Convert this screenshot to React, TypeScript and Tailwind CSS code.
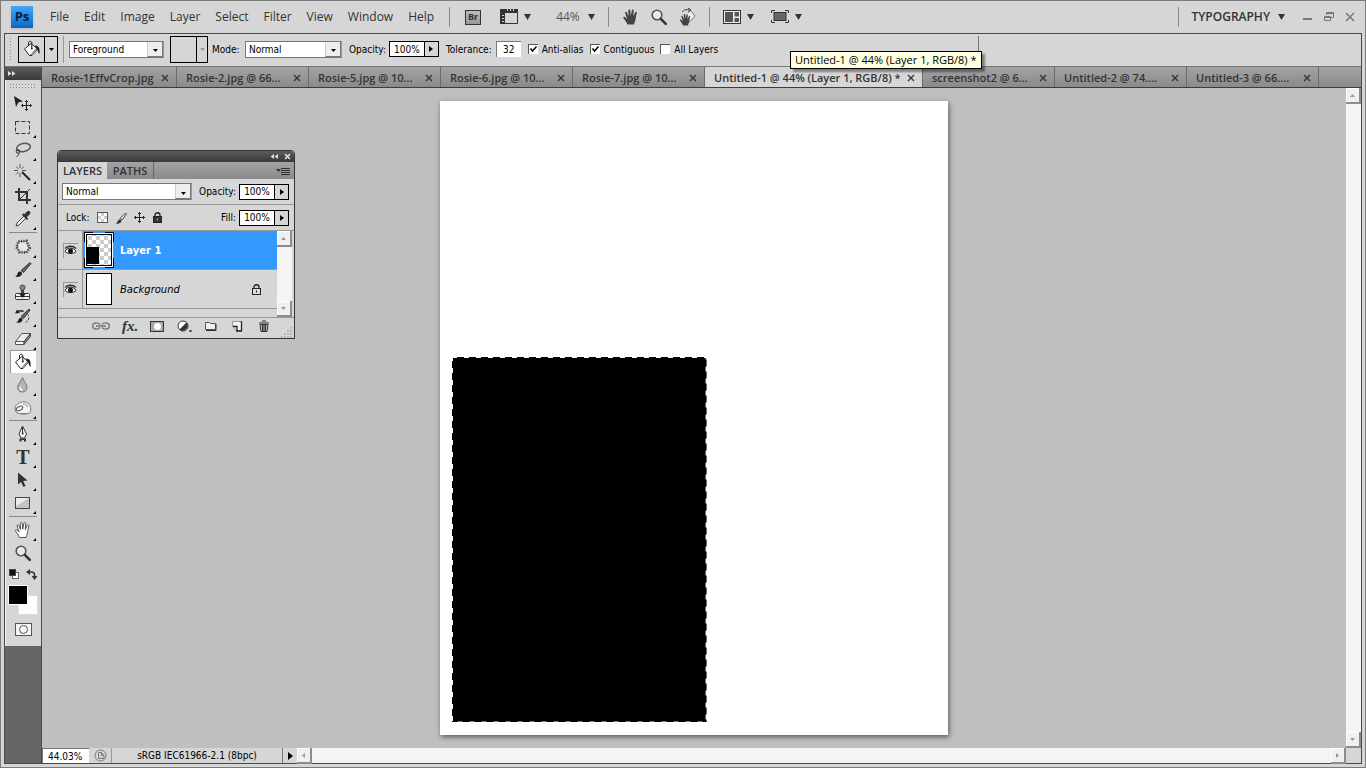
import { useState } from 'react';
import type { ReactNode } from 'react';

const MENUS = ['File', 'Edit', 'Image', 'Layer', 'Select', 'Filter', 'View', 'Window', 'Help'];

const TABS = [
  'Rosie-1EffvCrop.jpg',
  'Rosie-2.jpg @ 66...',
  'Rosie-5.jpg @ 10...',
  'Rosie-6.jpg @ 10...',
  'Rosie-7.jpg @ 10...',
  'Untitled-1 @ 44% (Layer 1, RGB/8) *',
  'screenshot2 @ 6...',
  'Untitled-2 @ 74....',
  'Untitled-3 @ 66....',
];
const ACTIVE_TAB = 5;

function Icon({ size = 18, className = '', children }: { size?: number; className?: string; children: ReactNode }) {
  return (
    <svg
      width={size}
      height={size}
      viewBox={`0 0 ${size} ${size}`}
      fill="none"
      stroke="#333"
      className={`shrink-0 ${className}`}
      aria-hidden="true"
    >
      {children}
    </svg>
  );
}

function Caret() {
  return (
    <svg width="7" height="6" viewBox="0 0 7 6" fill="#333" className="shrink-0" aria-hidden="true">
      <path d="M0 0h7L3.500 6z" />
    </svg>
  );
}

function SmallCaret({ fill = '#000' }: { fill?: string }) {
  return (
    <svg width="5" height="3" viewBox="0 0 5 3" fill={fill} className="shrink-0" aria-hidden="true">
      <path d="M0 0h5L2.500 3z" />
    </svg>
  );
}

function RightCaret() {
  return (
    <svg width="4" height="6" viewBox="0 0 4 6" fill="#000" className="shrink-0" aria-hidden="true">
      <path d="M0 0l4 3-4 3z" />
    </svg>
  );
}

function BucketIcon() {
  return (
    <Icon>
      <path d="M1.500 9L8 3.500l6.500 5.500L9 15.500H6.500z" fill="#fff" stroke="#222" />
      <path d="M7 15l5.500-6.500 2 .5L9.500 15z" fill="#999" stroke="none" />
      <path d="M5.500 6V3c0-2.300 3.300-2.300 3.300 0v5" stroke="#222" />
      <circle cx="8.800" cy="8.500" r="1" fill="#222" stroke="none" />
      <path d="M12 5.500c3.500 0 5 2 4.600 8.500-1.300-.5-1.500-3.500-3-5z" fill="#222" stroke="none" />
    </Icon>
  );
}

function ZoomIcon() {
  return (
    <Icon>
      <circle cx="7" cy="7" r="4.800" fill="#e9e9e9" strokeWidth="1.600" stroke="#555" />
      <path d="M4.500 6.500c.3-1.200 1-1.900 2.200-2" stroke="#fff" />
      <path d="M10.800 10.800l5 5" strokeWidth="2.600" strokeLinecap="round" />
    </Icon>
  );
}

const HAND_PATH =
  'M5.500 16.500c-1-2.500-2.500-4-4-6.300-.8-1.300.7-2 1.700-1l1.900 1.900L3.200 5c-.4-1.500 1.300-1.900 1.800-.5l1.600 4L6.300 2.600c0-1.500 1.900-1.500 2 0l.5 5.500L9.800 2.500c.3-1.400 2-1.200 1.900.3l-.4 5.800 1.800-4.100c.6-1.300 2.200-.7 1.700.8-.9 3-1 5.200-1.500 7.200-.3 1.600-1.100 2.500-1.300 4z';

const toolGroups: { name: string; icon: ReactNode; plain?: boolean }[][] = [
  [
    {
      name: 'Move',
      plain: true,
      icon: (
        <Icon>
          <path d="M0 1l9 5.500-4.500.8L2 12z" fill="#222" stroke="none" />
          <path
            d="M12.500 5.500v10M7.500 10.500h10M11 7l1.500-1.500L14 7M11 14l1.500 1.500L14 14M9 9l-1.500 1.500L9 12M16 9l1.500 1.500L16 12"
            stroke="#222"
          />
        </Icon>
      ),
    },
    {
      name: 'Rectangular Marquee',
      icon: (
        <Icon>
          <rect x="1.500" y="3.500" width="14" height="12" strokeDasharray="4 2" />
        </Icon>
      ),
    },
    {
      name: 'Lasso',
      icon: (
        <Icon>
          <ellipse cx="9.500" cy="6.500" rx="7" ry="4" transform="rotate(-12 9.500 6.500)" strokeWidth="1.500" stroke="#555" />
          <circle cx="4" cy="10.500" r="1.800" />
          <path d="M4 12c1.500 1 .8 3-1.500 3.500" />
        </Icon>
      ),
    },
    {
      name: 'Magic Wand',
      icon: (
        <Icon>
          <path d="M8 8l8 8" stroke="#222" strokeWidth="2" />
          <path d="M6 0v4M6 9v4M0 6.500h4M8 6.500h4M2 2.500l2.500 2.500M10 2.500L7.500 5M2 10.500L4.500 8" stroke="#555" />
        </Icon>
      ),
    },
    {
      name: 'Crop',
      icon: (
        <Icon>
          <path d="M5 1v12h12M1 5h12v12" strokeWidth="2" />
          <path d="M5 13L16 2" />
        </Icon>
      ),
    },
    {
      name: 'Eyedropper',
      icon: (
        <Icon>
          <path d="M2 16l1-3 7-7 2 2-7 7z" fill="#eee" stroke="#444" />
          <path d="M8 5l5 5 1.300-1.300-1.500-1.500L16 4c1.500-2-1-4-3-2.500L10.500 4 9.300 3.200z" fill="#333" stroke="none" />
        </Icon>
      ),
    },
  ],
  [
    {
      name: 'Patch',
      icon: (
        <Icon>
          <path d="M4.500 3.500l8-.5 3 7-3 4.500-7-.5-3-5z" fill="#e8e8e8" stroke="#777" />
          <path d="M4.500 3.500l8-.5 3 7-3 4.500-7-.5-3-5z" stroke="#444" strokeWidth="3" strokeDasharray="1 1.500" />
        </Icon>
      ),
    },
    {
      name: 'Brush',
      icon: (
        <Icon>
          <path d="M7 9.500L16 1.500l1 1-7.500 9z" fill="#666" />
          <path d="M1 15.500c2.500-.5 2-3 3.500-4.500 1.500-1.300 4 .2 3.500 2-.7 2.500-4.500 3.500-7 2.500z" fill="#222" stroke="none" />
        </Icon>
      ),
    },
    {
      name: 'Clone Stamp',
      icon: (
        <Icon>
          <circle cx="8.500" cy="3.500" r="2.500" fill="#888" stroke="#444" />
          <path d="M7.500 6.500h2v3h-2z" fill="#555" />
          <rect x="1.500" y="9.500" width="14" height="6" rx="1" fill="#f3f3f3" />
          <path d="M2 12.500h13" />
          <path d="M5.500 10h6l-3 4z" fill="#222" stroke="none" />
        </Icon>
      ),
    },
    {
      name: 'History Brush',
      icon: (
        <Icon>
          <path d="M7 9.500L15 2l1 1-6.500 8.500z" fill="#666" />
          <path d="M2 15.500c2.500-.5 2-3 3.500-4.300 1.500-1 3.500.3 3 2-.7 2.300-4.300 3.200-6.500 2.300z" fill="#222" stroke="none" />
          <path d="M3 5.500c2-2 4.500-2 6.500-1" stroke="#222" strokeWidth="1.500" />
          <path d="M1 6.500L3 2.500 6 6z" fill="#222" stroke="none" />
          <path d="M14 7.500c2 3 .5 7-3 8" strokeDasharray="2 1.500" />
        </Icon>
      ),
    },
    {
      name: 'Eraser',
      icon: (
        <Icon>
          <path d="M1.500 11.500L8 3.500h8.500l-6.500 8z" fill="#ececec" stroke="#555" />
          <path d="M1.500 11.500H10v3H1.500z" fill="#fff" stroke="#555" />
          <path d="M10 14.500l6.500-8v-3l-6.500 8z" fill="#888" stroke="#444" />
        </Icon>
      ),
    },
    { name: 'Paint Bucket', icon: <BucketIcon /> },
    {
      name: 'Blur',
      icon: (
        <Icon>
          <path d="M8.500 1.500c1 4 4.500 6.500 4.500 10 0 6-9.500 6-9.500 0 0-3.500 4-6 5-10z" fill="#b5b5b5" stroke="#777" />
          <path d="M6 11c0 2 1 3 2.500 3.300" stroke="#f5f5f5" strokeWidth="1.500" />
        </Icon>
      ),
    },
    {
      name: 'Sponge',
      icon: (
        <Icon>
          <path d="M1 9c0-3 3-4 5-5.500 3-1.500 8-.5 10 3 1.500 3 1 6-1 8H4.500C2 14 1 12 1 9z" fill="#f3f3f3" stroke="#777" />
          <ellipse cx="5.500" cy="9.500" rx="3.500" ry="2" transform="rotate(-25 5.500 9.500)" stroke="#555" />
          <path d="M5 14.500c3 1 7 1 10-.5M9 5c2 0 4 1 5 3" stroke="#888" />
        </Icon>
      ),
    },
  ],
  [
    {
      name: 'Pen',
      icon: (
        <Icon>
          <path d="M8.500 1L5 9l2 4h3.500l2-4z" fill="#f5f5f5" />
          <path d="M8.500 2v6" />
          <circle cx="8.700" cy="8.500" r="1" fill="#333" stroke="none" />
          <path d="M5.500 13.500h6.500v3H10v-1.500H7.500v1.500h-2z" fill="#333" stroke="none" />
        </Icon>
      ),
    },
    {
      name: 'Horizontal Type',
      icon: <span className="font-['Liberation_Serif',serif] text-[20px] leading-5 font-bold text-[#333]">T</span>,
    },
    {
      name: 'Path Selection',
      icon: (
        <Icon>
          <path d="M4 1.500v12l3-2.500 2.500 5 2-1-2.300-5 4.300-.5z" fill="#333" stroke="none" />
        </Icon>
      ),
    },
    {
      name: 'Rectangle',
      icon: (
        <Icon>
          <rect x="1.500" y="3.500" width="14" height="11" fill="#c4c4c4" stroke="#444" />
          <path d="M2 4h13L2 12z" fill="#ececec" stroke="none" />
        </Icon>
      ),
    },
  ],
  [
    {
      name: 'Hand',
      icon: (
        <Icon>
          <path d={HAND_PATH} fill="#fff" stroke="#555" />
        </Icon>
      ),
    },
    { name: 'Zoom', plain: true, icon: <ZoomIcon /> },
  ],
];

// height of the divider above each group
const DIVIDERS = ['', 'h-[5px]', 'h-[3px]', 'h-1'];

function DoubleArrow({ left = false }: { left?: boolean }) {
  return (
    <svg width="8" height="5" viewBox="0 0 8 5" fill="#ddd" className={left ? 'rotate-180' : ''} aria-hidden="true">
      <path d="M0 0l3.500 2.500L0 5zM4 0l3.500 2.500L4 5z" />
    </svg>
  );
}

function Toolbox() {
  const [tool, setTool] = useState('Paint Bucket');

  return (
    <aside className="flex w-[37px] shrink-0 flex-col border-r border-[#4a4a4a] bg-[#666]">
      <div className="flex h-[13px] shrink-0 items-center bg-linear-to-b from-[#5c5c5c] to-[#393939] pl-[3px]">
        <DoubleArrow />
      </div>
      <div className="flex flex-col items-center bg-[#d6d6d6] pb-2.5 shadow-[inset_1px_0_0_#f0f0f0]">
        <div className="flex h-3 items-center">
          <div className="h-[6px] w-7 bg-[radial-gradient(#888_1px,transparent_1px)] bg-size-[3px_3px]" />
        </div>
        {toolGroups.map((group, i) => (
          <div key={i} className="flex w-full flex-col items-center">
            {i > 0 && (
              <div className={`flex items-center ${DIVIDERS[i]}`}>
                <div className="h-px w-7 bg-[#888]" />
              </div>
            )}
            {group.map((t) => (
              <button
                key={t.name}
                type="button"
                aria-label={t.name}
                onClick={() => setTool(t.name)}
                className={`relative flex h-[23px] w-[26px] items-center justify-center ${
                  tool === t.name ? 'bg-white shadow-[inset_1px_1px_0_#999]' : ''
                }`}
              >
                {t.icon}
                {!t.plain && (
                  <svg width="3" height="3" viewBox="0 0 3 3" className="absolute right-0 bottom-0" aria-hidden="true">
                    <path d="M3 0v3H0z" fill="#000" />
                  </svg>
                )}
              </button>
            ))}
          </div>
        ))}
        <div className="flex h-[21px] w-7 items-center justify-between">
          <button type="button" aria-label="Default colors">
            <Icon size={11}>
              <rect x="3.500" y="3.500" width="6" height="6" fill="#fff" stroke="#666" />
              <rect x="0.500" y="0.500" width="6" height="6" fill="#111" stroke="#444" />
            </Icon>
          </button>
          <button type="button" aria-label="Swap colors">
            <Icon size={11}>
              <path d="M2.500 3h3c2 0 3 1 3 3v2" strokeWidth="1.500" />
              <path d="M0 3l4-3v6zM5.500 7h6l-3 4z" fill="#333" stroke="none" />
            </Icon>
          </button>
        </div>
        <div className="grid h-8 grid-cols-[10px_10px_10px] grid-rows-[10px_10px_10px]">
          <button type="button" aria-label="Background color" className="col-start-2 col-end-4 row-start-2 row-end-4 border border-[#ddd] bg-white" />
          <button type="button" aria-label="Foreground color" className="col-start-1 col-end-3 row-start-1 row-end-3 border border-white bg-black" />
        </div>
        <button type="button" aria-label="Quick mask" className="mt-1.5 flex h-[13px] w-[17px] items-center justify-center border border-[#555] bg-[#f5f5f5]">
          <span className="h-[9px] w-[9px] rounded-full border border-[#555]" />
        </button>
      </div>
    </aside>
  );
}

function Select({ label, options, className }: { label: string; options: string[]; className: string }) {
  return (
    <span className={`relative flex h-[17px] border border-[#777] border-r-[#999] bg-white ${className}`}>
      <select aria-label={label} className="w-full appearance-none pl-[3px] leading-[15px] outline-none">
        {options.map((o) => (
          <option key={o}>{o}</option>
        ))}
      </select>
      <span className="pointer-events-none absolute inset-y-0 right-0 flex w-4 items-center justify-center border-r border-b border-l border-[#777] border-l-[#ccc] bg-[#eee] pt-1">
        <SmallCaret />
      </span>
    </span>
  );
}

function Percent({ label, value }: { label: string; value: string }) {
  return (
    <div className="flex items-center gap-[3px]">
      <label htmlFor={label}>{label.split('-')[0]}:</label>
      <div className="flex h-4 border border-black">
        <input id={label} defaultValue={value} className="w-[34px] bg-white text-center outline-none" />
        <button type="button" aria-label={`${label} slider`} className="flex w-[14px] items-center justify-center border-l border-black">
          <RightCaret />
        </button>
      </div>
    </div>
  );
}

function Check({ label, checked = false }: { label: string; checked?: boolean }) {
  const [on, setOn] = useState(checked);
  return (
    <label className="flex items-center gap-1">
      <span className="relative flex">
        <input
          type="checkbox"
          checked={on}
          onChange={() => setOn(!on)}
          className="h-[10px] w-[10px] appearance-none border-t border-l border-[#555] bg-white"
        />
        {on && (
          <svg width="10" height="10" viewBox="0 0 10 10" className="pointer-events-none absolute inset-0" aria-hidden="true">
            <path d="M2.500 4.500l2 2.500 4-4.500" fill="none" stroke="#000" strokeWidth="1.500" />
          </svg>
        )}
      </span>
      {label}
    </label>
  );
}

function MenuBar() {
  return (
    <header className="flex h-8 shrink-0 items-center font-['Open_Sans',sans-serif] text-xs text-[#333]">
      <div className="ml-2.5 flex h-[22px] w-[22px] items-center justify-center bg-linear-to-b from-[#3fa9f5] to-[#0a68c4] text-[13px] font-bold text-[#06213f] shadow">
        Ps
      </div>
      <nav className="ml-[17px] flex gap-[15px]">
        {MENUS.map((m) => (
          <button key={m} type="button">
            {m}
          </button>
        ))}
      </nav>
      <div className="ml-[15px] h-5 w-px bg-[#888]" />
      <button type="button" className="ml-[15px] flex h-[15px] w-4 items-center justify-center border border-[#333] bg-linear-to-b from-[#bbb] to-[#999] text-[9px] font-bold">
        Br
      </button>
      <button type="button" aria-label="View extras" className="ml-[19px] flex items-center gap-1.5">
        <Icon>
          <path d="M0 1h18v4H5v11H0z" fill="#333" stroke="none" />
          <path d="M5 15.500h12.500V5" />
          <path d="M7.500 1v2M10.500 1v2M13.500 1v2M2 7.500h2M2 10.500h2M2 13.500h2" stroke="#ccc" />
        </Icon>
        <Caret />
      </button>
      <button type="button" className="ml-[25px] flex items-center gap-2 text-[#555]">
        44% <Caret />
      </button>
      <div className="ml-[13px] h-5 w-px bg-[#888]" />
      <div className="ml-[13px] flex items-center gap-2.5">
        <button type="button" aria-label="Hand">
          <Icon>
            <path d={HAND_PATH} fill="#444" stroke="none" />
          </Icon>
        </button>
        <button type="button" aria-label="Zoom">
          <ZoomIcon />
        </button>
        <button type="button" aria-label="Rotate view">
          <Icon>
            <path d="M10 4l2-2 5 6-5 5.500-2-1.500" fill="#eee" stroke="#777" />
            <path d={HAND_PATH} fill="#444" stroke="none" transform="translate(1 5) scale(.75)" />
            <path d="M4 4c2-2.500 5-3 8-2M10 0l3 2-3 2.500" stroke="#444" />
          </Icon>
        </button>
      </div>
      <div className="ml-[13px] h-5 w-px bg-[#888]" />
      <button type="button" aria-label="Arrange documents" className="ml-[13px] flex items-center gap-1.5">
        <Icon>
          <rect x="0.500" y="2.500" width="17" height="13" fill="#eee" />
          <path d="M2 4h8v10H2zM11.500 4H16v4.500h-4.500zM11.500 10H16v4h-4.500z" fill="#555" stroke="none" />
        </Icon>
        <Caret />
      </button>
      <button type="button" aria-label="Screen mode" className="ml-[17px] flex items-center gap-1.5">
        <Icon>
          <path d="M.5 5V2.500H4M14 2.500h3.500V5M.5 12v2.500H4M14 14.500h3.500V12" />
          <rect x="3" y="4.500" width="12" height="8" fill="#666" />
        </Icon>
        <Caret />
      </button>
      <div className="ml-auto h-5 w-px bg-[#888]" />
      <button type="button" className="ml-3 flex items-center gap-2 font-semibold">
        TYPOGRAPHY <Caret />
      </button>
      <div className="mr-2.5 ml-[18px] flex gap-[11px]">
        <button type="button" aria-label="Minimize">
          <Icon size={10}>
            <path d="M0 7h9" stroke="#777" strokeWidth="2" />
          </Icon>
        </button>
        <button type="button" aria-label="Restore">
          <Icon size={10}>
            <path d="M2.500 3V.5h7v5H7M2.500 1.500h7M.5 4.500h6v4h-6zM.5 5.500h6" stroke="#777" />
          </Icon>
        </button>
        <button type="button" aria-label="Close">
          <Icon size={10}>
            <path d="M1 1l8 8M9 1L1 9" stroke="#777" strokeWidth="1.500" />
          </Icon>
        </button>
      </div>
    </header>
  );
}

function OptionsBar() {
  return (
    <div className="flex h-[33px] shrink-0 items-center border-b border-[#777] pb-0.5 pl-1">
      <div className="h-[25px] w-1 bg-[radial-gradient(#888_1px,transparent_1px)] bg-size-[3px_3px]" />
      <div className="ml-[5px] flex h-[27px] border border-black">
        <span className="flex w-[25px] items-center justify-center">
          <BucketIcon />
        </span>
        <button type="button" aria-label="Tool presets" className="flex w-[13px] items-center justify-center border-l border-black">
          <SmallCaret />
        </button>
      </div>
      <div className="ml-[5px] h-[27px] w-px bg-[#999]" />
      <Select label="Fill source" options={['Foreground', 'Pattern']} className="ml-[5px] w-[95px]" />
      <div className="ml-1.5 flex h-[27px] border border-black">
        <span className="w-[25px]" />
        <button type="button" disabled aria-label="Pattern picker" className="flex w-[11px] items-center justify-center border-l border-black">
          <SmallCaret fill="#999" />
        </button>
      </div>
      <span className="ml-1 w-[33px]">Mode:</span>
      <Select label="Mode" options={['Normal', 'Multiply', 'Screen']} className="mr-[7px] w-[97px]" />
      <Percent label="Opacity" value="100%" />
      <label htmlFor="tolerance" className="ml-[7px]">
        Tolerance:
      </label>
      <input id="tolerance" defaultValue="32" className="ml-1 h-4 w-[25px] border-t border-l border-[#777] bg-white text-center outline-none" />
      <div className="ml-[7px] flex gap-1.5">
        <Check label="Anti-alias" checked />
        <Check label="Contiguous" checked />
        <Check label="All Layers" />
      </div>
      <div className="ml-[260px] h-[27px] w-px bg-[#777]" />
    </div>
  );
}

function TabBar() {
  return (
    <div className="flex h-[21px] shrink-0 border-b border-[#3c3c3c] bg-linear-to-b from-[#a3a3a3] to-[#8a8a8a] font-['Open_Sans',sans-serif] text-[11px] font-semibold text-[#333]">
      {TABS.map((t, i) => (
        <div
          key={t}
          className={`relative flex items-center justify-between border-r border-[#6b6b6b] pt-0.5 pr-[7px] pl-[9px] ${
            i === ACTIVE_TAB ? 'w-[218px] bg-[#d6d6d6]' : i === 0 ? 'w-[135px]' : 'w-[132px]'
          }`}
        >
          <button type="button" className="whitespace-nowrap">
            {t}
          </button>
          <button type="button" aria-label={`Close ${t}`}>
            <Icon size={8}>
              <path d="M1 1l6 6M7 1L1 7" strokeWidth="1.300" />
            </Icon>
          </button>
          {i === ACTIVE_TAB && (
            <div
              role="tooltip"
              className="absolute -top-4 left-[85px] z-10 h-[18px] border border-black bg-[#ffffe1] px-1 leading-4 font-normal whitespace-nowrap text-black shadow-[3px_3px_2px_#0006]"
            >
              {t}
            </div>
          )}
        </div>
      ))}
    </div>
  );
}

function ScrollButton({ label, d, className = '' }: { label: string; d: string; className?: string }) {
  return (
    <button
      type="button"
      aria-label={label}
      className={`flex h-4 w-[15px] shrink-0 items-center justify-center border-r-2 border-b-2 border-[#8c8c8c] bg-[#f0f0f0] shadow-[inset_1px_1px_0_#fff] ${className}`}
    >
      <svg width="5" height="5" viewBox="0 0 5 5" fill="#999" aria-hidden="true">
        <path d={d} />
      </svg>
    </button>
  );
}

const UP = 'M0 4h5L2.500 1z';
const DOWN = 'M0 1h5L2.500 4z';
const LEFT = 'M4 0v5L1 2.500z';
const RIGHT = 'M1 0v5l3-2.500z';

function VerticalScroll() {
  return (
    <div className="flex w-[15px] shrink-0 flex-col justify-between bg-[#f4f4f4]">
      <ScrollButton label="Scroll up" d={UP} />
      <ScrollButton label="Scroll down" d={DOWN} />
    </div>
  );
}

function Eye() {
  return (
    <button type="button" aria-label="Toggle visibility" className="flex h-[15px] w-[15px] items-center justify-center border-t border-l border-[#999]">
      <Icon size={13}>
        <path d="M1 7.500C3 3 10 3 12 7.500 10 10 4 10.500 1 7.500z" fill="#fff" stroke="#222" />
        <circle cx="6.500" cy="7" r="2.500" fill="#111" stroke="none" />
        <path d="M1 4.500c3-3 8-3 11 0" strokeWidth="1.300" />
      </Icon>
    </button>
  );
}

function Padlock({ solid = false }: { solid?: boolean }) {
  return (
    <Icon size={11}>
      <path d="M3 5V3c0-3 5-3 5 0v2" stroke="#222" strokeWidth="1.300" />
      <rect x="1.500" y="4.500" width="8" height="6" fill={solid ? '#333' : '#ddd'} stroke="#222" />
      <path d="M5.500 6.500v2" stroke={solid ? '#aaa' : '#222'} />
    </Icon>
  );
}

// Thumbnail with corner brackets, as drawn for the selected layer
function LayerThumb() {
  return (
    <svg width="30" height="36" viewBox="0 0 30 36" className="shrink-0" aria-hidden="true">
      <defs>
        <pattern id="checker" width="8" height="8" patternUnits="userSpaceOnUse">
          <rect width="8" height="8" fill="#fff" />
          <path d="M0 0h4v4H0zM4 4h4v4H4z" fill="#ccc" />
        </pattern>
      </defs>
      <path d="M.5 10V.5H9M21 .5h8.500V10M.5 26v9.500H9M21 35.500h8.500V26" fill="none" stroke="#000" />
      <rect x="1.500" y="1.500" width="27" height="33" fill="#000" stroke="#fff" />
      <rect x="3" y="3" width="24" height="30" fill="url(#checker)" />
      <rect x="3" y="15" width="12" height="17" fill="#000" />
    </svg>
  );
}

function LayersPanel() {
  return (
    <section aria-label="Layers" className="absolute top-[62px] left-[15px] w-[238px] rounded-t border border-[#333] bg-[#d6d6d6]">
      <div className="flex h-[11px] items-center justify-end gap-1.5 rounded-t-sm bg-linear-to-b from-[#5c5c5c] to-[#393939] pr-[3px]">
        <DoubleArrow left />
        <Icon size={7}>
          <path d="M1 1l5 5M6 1L1 6" stroke="#eee" strokeWidth="1.300" />
        </Icon>
      </div>
      <div className="flex h-[17px] items-stretch bg-linear-to-b from-[#a3a3a3] to-[#8a8a8a] font-['Open_Sans',sans-serif] text-[11px] font-semibold text-[#333]">
        <button type="button" className="w-[49px] bg-[#d6d6d6] leading-[17px]">
          LAYERS
        </button>
        <button type="button" className="w-[47px] border-r border-[#666] leading-[17px]">
          PATHS
        </button>
        <button type="button" aria-label="Panel menu" className="mr-1 ml-auto">
          <Icon size={14}>
            <path d="M5 4.500h9M5 6.500h9M5 8.500h9M5 10.500h9" />
            <path d="M0 5h5L2.500 8z" fill="#333" stroke="none" />
          </Icon>
        </button>
      </div>
      <div className="flex h-[26px] items-center justify-between border-b border-[#999] pr-[5px] pl-1">
        <Select label="Blend mode" options={['Normal', 'Multiply', 'Screen']} className="w-[130px]" />
        <Percent label="Opacity-layer" value="100%" />
      </div>
      <div className="flex h-[26px] items-center justify-between border-b border-[#999] pr-[5px] pl-2">
        <div className="flex items-center gap-[7px]">
          Lock:
          <button
            type="button"
            aria-label="Lock transparent pixels"
            className="h-[11px] w-[11px] border border-[#555] bg-[conic-gradient(#ccc_25%,#fff_0_50%,#ccc_0_75%,#fff_0)] bg-size-[6px_6px]"
          />
          <button type="button" aria-label="Lock image pixels">
            <Icon size={12}>
              <path d="M5 6.500L10.500 1l1 1-4.500 6z" fill="#eee" stroke="#444" />
              <path d="M1 11.500c1.500-1 1.500-3 3-4 2-.5 3 1 2 2.500-1 1.500-3 2-5 1.500z" fill="#333" stroke="none" />
            </Icon>
          </button>
          <button type="button" aria-label="Lock position">
            <Icon size={11}>
              <path d="M5.500 0v11M0 5.500h11M4 2l1.500-1.500L7 2M4 9l1.500 1.500L7 9M2 4L.5 5.500 2 7M9 4l1.500 1.500L9 7" stroke="#222" />
            </Icon>
          </button>
          <button type="button" aria-label="Lock all">
            <Padlock solid />
          </button>
        </div>
        <Percent label="Fill" value="100%" />
      </div>
      <div className="flex border-b border-[#999] pr-0.5">
        <ul className="flex-1 pb-2">
          <li className="flex h-[39px] border-b border-[#999]">
            <span className="flex w-[25px] items-center justify-center border-r border-[#999]">
              <Eye />
            </span>
            <div className="flex flex-1 items-center gap-1.5 bg-[#3399ff] pl-px font-['DejaVu_Sans',sans-serif] font-bold text-white">
              <LayerThumb />
              Layer 1
            </div>
          </li>
          <li className="flex h-[39px] border-b border-[#999]">
            <span className="flex w-[25px] items-center justify-center border-r border-[#999]">
              <Eye />
            </span>
            <div className="flex flex-1 items-center gap-2 pr-[15px] pl-[3px] font-['DejaVu_Sans',sans-serif] italic">
              <span className="h-8 w-[26px] border border-black bg-white" />
              Background
              <span className="ml-auto">
                <Padlock />
              </span>
            </div>
          </li>
        </ul>
        <VerticalScroll />
      </div>
      <div className="flex h-5 items-start justify-between pr-0.5 pl-[34px]">
        <div className="flex h-4 items-center gap-3">
          <button type="button" aria-label="Link layers">
            <Icon>
              <path d="M8 7.500C6 5 .5 5.500.5 9S6 13 8 10.500M10 7.500c2-2.500 7.500-2 7.500 1.500s-5.500 4-7.500 1.500M4 9h10" stroke="#777" strokeWidth="1.300" />
            </Icon>
          </button>
          <button type="button" aria-label="Layer style" className="font-['Liberation_Serif',serif] text-[15px] leading-4 font-bold text-[#333] italic">
            fx.
          </button>
          <button type="button" aria-label="Layer mask" className="flex h-[11px] w-[14px] items-center justify-center border border-[#333] bg-[#aaa]">
            <span className="h-[7px] w-[7px] rounded-full bg-white" />
          </button>
          <button type="button" aria-label="Adjustment layer">
            <Icon size={16}>
              <circle cx="7" cy="8" r="5" fill="#fff" />
              <path d="M3.500 11.500L10.500 4.500c4 4-2.500 11-7 7z" fill="#333" stroke="none" />
              <path d="M14.500 12v2" strokeWidth="2" />
            </Icon>
          </button>
          <button type="button" aria-label="New group">
            <Icon size={14}>
              <path d="M1.500 3.500h4l1 1h5v6h-10z" fill="#eee" stroke="#555" />
              <path d="M12 5v6.500H2" />
            </Icon>
          </button>
          <button type="button" aria-label="New layer">
            <Icon size={14}>
              <path d="M2.500 2.500h9v9h-5l-4-4z" fill="#f3f3f3" stroke="#999" />
              <path d="M11.500 2v10H6M3 7.500h4V12" stroke="#222" strokeWidth="1.300" />
            </Icon>
          </button>
          <button type="button" aria-label="Delete layer">
            <Icon size={14}>
              <path d="M4 5.500h8l-1 7H5z" fill="#bbb" />
              <path d="M3 4h10M6 2h4M6.500 6v6M8 6v6M9.500 6v6" />
            </Icon>
          </button>
        </div>
        <Icon size={11} className="self-end">
          <path d="M10 0v11M7 3v8M4 6v5M1 9v2" stroke="#999" strokeDasharray="2 1" />
        </Icon>
      </div>
    </section>
  );
}

function Canvas() {
  return (
    <main className="relative flex min-h-0 flex-1 items-stretch">
      <div className="flex min-w-0 flex-1 justify-center bg-[#bfbfbf] py-[13px]">
        <div className="flex aspect-4/5 h-full items-end bg-white shadow-[1px_2px_5px_#0008]">
          <svg className="mb-[13px] ml-3 h-[calc(57%+4px)] w-[calc(50%+1px)]" role="img" aria-label="Selection">
            <rect width="100%" height="100%" fill="#000" stroke="#fff" strokeWidth="2" strokeDasharray="5 7" />
          </svg>
        </div>
      </div>
      <VerticalScroll />
      <LayersPanel />
    </main>
  );
}

function StatusBar() {
  return (
    <footer className="flex h-[15px] shrink-0 items-stretch">
      <input aria-label="Zoom level" defaultValue="44.03%" className="w-[47px] border-t border-l border-[#777] bg-white pl-[5px] outline-none" />
      <span className="flex w-[23px] items-center justify-center border-r border-[#999]">
        <Icon size={13}>
          <circle cx="6.500" cy="6.500" r="5.500" stroke="#777" />
          <path d="M4.500 3.500h3l2.500 3v3H4.500zM7.500 3.500v3H10" stroke="#777" />
        </Icon>
      </span>
      <span className="w-[171px] border-r border-[#777] text-center leading-[15px]">sRGB IEC61966-2.1 (8bpc)</span>
      <button type="button" aria-label="Status options" className="flex w-[14px] items-center justify-center">
        <svg width="5" height="8" viewBox="0 0 5 8" aria-hidden="true">
          <path d="M0 0l5 4-5 4z" fill="#000" />
        </svg>
      </button>
      <div className="flex flex-1 justify-between bg-[#f4f4f4]">
        <ScrollButton label="Scroll left" d={LEFT} className="w-4" />
        <ScrollButton label="Scroll right" d={RIGHT} className="w-4" />
      </div>
      <div className="w-[15px] shrink-0" />
    </footer>
  );
}

export default function App() {
  return (
    <div className="flex h-screen flex-col overflow-hidden border border-[#7b7b7b] bg-[#d6d6d6] font-['DejaVu_Sans_Condensed','DejaVu_Sans',sans-serif] text-[10px] text-black">
      <MenuBar />
      <div className="mx-[3px] mb-[3px] flex min-h-0 flex-1 flex-col border border-[#4a4a4a]">
        <OptionsBar />
        <div className="flex min-h-0 flex-1">
          <Toolbox />
          <div className="flex min-w-0 flex-1 flex-col">
            <TabBar />
            <Canvas />
            <StatusBar />
          </div>
        </div>
      </div>
    </div>
  );
}
